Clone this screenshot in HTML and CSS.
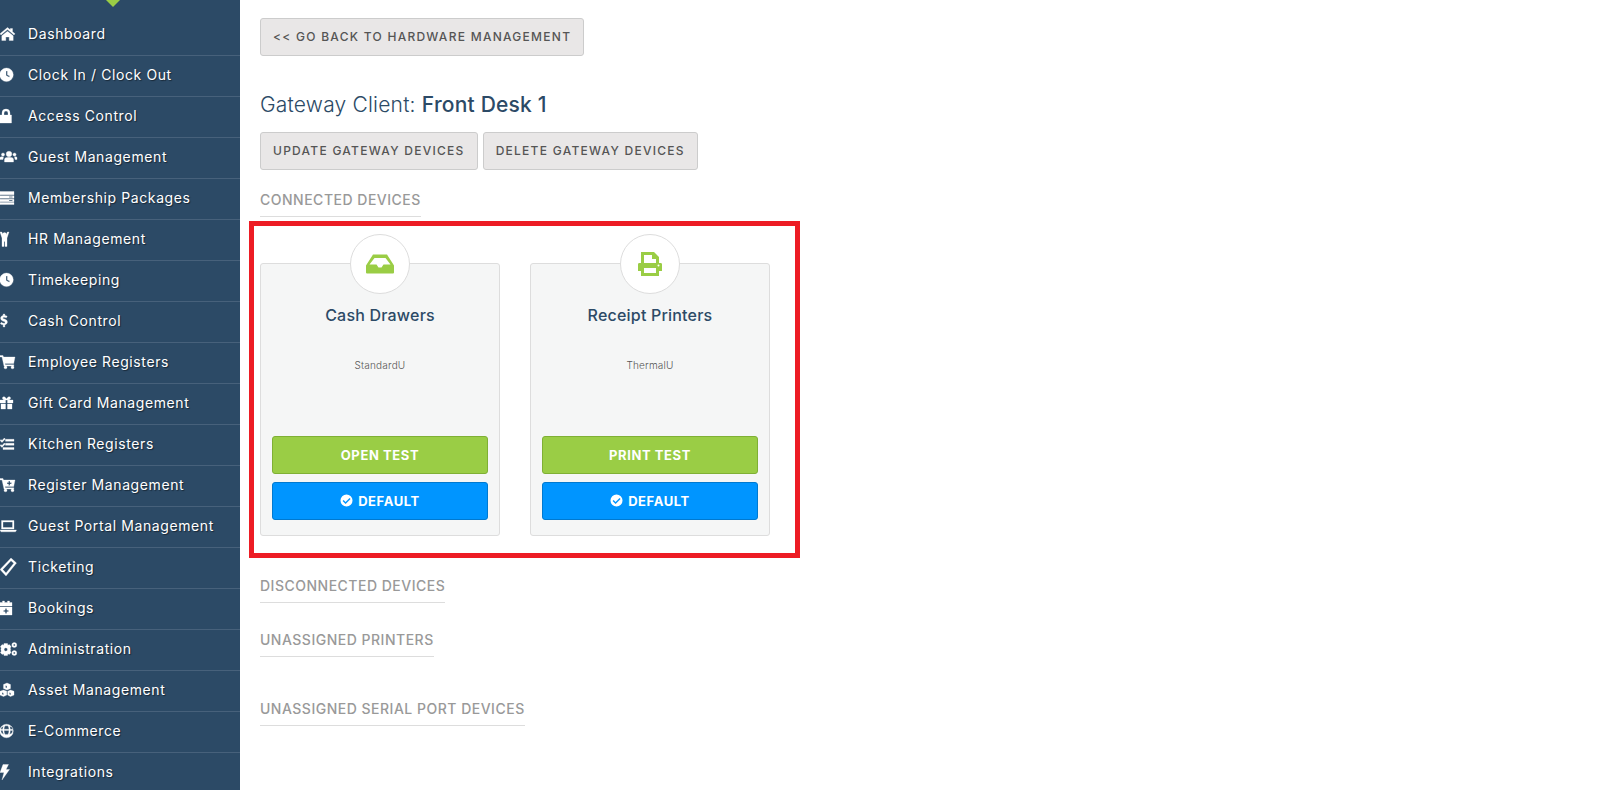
FILE: index.html
```html
<!DOCTYPE html>
<html lang="en">
  <head>
    <meta charset="UTF-8" />
    <title>Gateway Client</title>
    <link rel="stylesheet" href="styles.css">
  </head>
  <body>
    <nav class="sidebar">
      <div class="notch"></div>
      <a class="nav-item"><svg class="nav-icon" viewBox="0 0 16 16"><path d="M7.500 1.500 0 7.800l1 1.200 6.500-5.400L14 9l1-1.200-2.500-2.100V2.500h-2.200v1.300zM1.800 9.800V14.500h4v-3.500h3.400v3.500h4V9.800L7.500 5.200z"/></svg>Dashboard</a>
      <a class="nav-item"><svg class="nav-icon" viewBox="0 0 16 16"><path fill-rule="evenodd" d="M6.500 1a6.800 6.800 0 1 1 0 13.600A6.800 6.800 0 0 1 6.500 1zM6 4v4.500l3.200 1.700.6-1.100L7.400 7.800V4z"/></svg>Clock In / Clock Out</a>
      <a class="nav-item"><svg class="nav-icon" viewBox="0 0 16 16"><path fill-rule="evenodd" d="M2 7V5a4 4 0 0 1 8 0v2h1.500v8H0V7zm2 0h4V5a2 2 0 0 0-4 0z"/></svg>Access Control</a>
      <a class="nav-item"><svg class="nav-icon" viewBox="0 0 16 16"><circle cx="9" cy="5" r="2.800"/><circle cx="3" cy="5.500" r="1.600"/><circle cx="14.500" cy="5.500" r="1.600"/><path d="M4.500 13v-2.500C4.500 9 6 8.200 9 8.200s4.500.8 4.500 2.300V13zM0 10.500V8.800C0 8 1 7.600 3.500 7.800L3 10.500zM17 10.500V8.800c0-.8-1-1.200-2.500-1l.5 2.700z"/></svg>Guest Management</a>
      <a class="nav-item"><svg class="nav-icon" viewBox="0 0 16 16"><path fill-rule="evenodd" d="M0 1.500h14v3.200H0zM0 5.700h14v2.600H0zM9 6.500v1h3.500v-1zM0 9.300h14v2.400H0zM9 10v1h3.500v-1zM0 12.500h14v2H0z"/></svg>Membership Packages</a>
      <a class="nav-item"><svg class="nav-icon" viewBox="0 0 16 16"><circle cx="4.500" cy="3.500" r="1.900"/><path d="M0 1h1.800l1.600 3.500h2.400L7.400 1H9L7 7v8.500H5V10.500H4v5H2V7z"/></svg>HR Management</a>
      <a class="nav-item"><svg class="nav-icon" viewBox="0 0 16 16"><path fill-rule="evenodd" d="M6.500 1a6.800 6.800 0 1 1 0 13.600A6.800 6.800 0 0 1 6.500 1zM6 4v4.500l3.200 1.700.6-1.100L7.400 7.800V4z"/></svg>Timekeeping</a>
      <a class="nav-item"><svg class="nav-icon" viewBox="0 0 16 16"><path d="M3.200 1h1.600v1.500c1 .1 1.800.4 2.400.8l-.8 1.500C5.600 4.400 4.800 4.200 4 4.200c-.8 0-1.200.3-1.200.7 0 1.200 4.600.8 4.600 4 0 1.500-1 2.500-2.600 2.800V14H3.200v-2.200C2 11.700 1 11.300.3 10.700l1-1.400c.8.600 1.700 1 2.500 1 .9 0 1.300-.4 1.300-.9C5.100 8.100.6 8.500.6 5.300c0-1.500 1-2.500 2.600-2.800z"/></svg>Cash Control</a>
      <a class="nav-item"><svg class="nav-icon" viewBox="0 0 16 16"><circle cx="5.500" cy="13.300" r="1.500"/><circle cx="12.500" cy="13.300" r="1.500"/><path d="M0 1.500h3l.5 1.500H15l-1.300 6.500H5l.3 1.200h8.500V12H4L2 3H0z"/></svg>Employee Registers</a>
      <a class="nav-item"><svg class="nav-icon" viewBox="0 0 16 16"><path fill-rule="evenodd" d="M0 5h5c-2-.3-2.800-1.200-2.500-2.300C2.800 1.500 5 1.300 6.500 4 8 1.300 10.200 1.500 10.500 2.700 10.800 3.800 10 4.700 8 5h5v3H7.500V5h-2v3H0zM1 9h4.500v5H1zM7.500 9H12v5H7.500z"/></svg>Gift Card Management</a>
      <a class="nav-item"><svg class="nav-icon" viewBox="0 0 16 16"><path d="M0 4.500 1 3.500l1 1L4.300 2l1 1L2 6.500zM0 9.500l1-1 1 1 2.300-2.500 1 1L2 11.500zM5.500 3.300H14V5.300H5.500zM5.500 7.300H14V9.300H5.500zM3 11.500H14V13.500H3z"/></svg>Kitchen Registers</a>
      <a class="nav-item"><svg class="nav-icon" viewBox="0 0 16 16"><circle cx="5.500" cy="13.300" r="1.500"/><circle cx="12.500" cy="13.300" r="1.500"/><path fill-rule="evenodd" d="M0 1.500h3l.5 1.500H15l-1.300 6.500H5l.3 1.200h8.500V12H4L2 3H0zM8.500 4v1.500H7V7h1.500v1.500H10V7h1.500V5.500H10V4z"/></svg>Register Management</a>
      <a class="nav-item"><svg class="nav-icon" viewBox="0 0 16 16"><path fill-rule="evenodd" d="M1.500 2.500h12.500v8.500h-12.500zM3 4v5.500h9.500V4zM0 12h16.500l-1 1.800H1z"/></svg>Guest Portal Management</a>
      <a class="nav-item"><svg class="nav-icon" viewBox="0 0 16 16"><path fill-rule="evenodd" d="M11-1 16.500 4 6 17 0 10.500zM11 1.800 2.800 10.500 6 14 13.800 4.200z"/></svg>Ticketing</a>
      <a class="nav-item"><svg class="nav-icon" viewBox="0 0 16 16"><path fill-rule="evenodd" d="M2.500 1h2v1.500h3V1h2v1.500H12V6H0V2.500h2.500zM0 7h12v8H0zM5.200 8.500v1.700H3.500v1.500h1.700v1.800h1.600v-1.800h1.700v-1.500H6.800V8.500z"/></svg>Bookings</a>
      <a class="nav-item"><svg class="nav-icon" viewBox="0 0 16 16"><path fill-rule="evenodd" d="M4 2.500h3.500l.4 1.700 1.500-.6 1.800 2.200-1 1.200.5 1.500-.5 1.500 1 1.200-1.800 2.200-1.500-.6-.4 1.700H4l-.4-1.700-1.500.6L.3 11.400l1-1.200L.8 8.500l.5-1.500-1-1.200 1.800-2.200 1.500.6zM5.800 6.800a1.700 1.700 0 1 0 0 3.400 1.700 1.700 0 0 0 0-3.400z"/><path fill-rule="evenodd" d="M14.300 1.500a2.500 2.500 0 1 1 0 5 2.500 2.500 0 0 1 0-5zm0 1.600a.9.9 0 1 0 0 1.800.9.9 0 0 0 0-1.800zM14.300 9.500a2.500 2.500 0 1 1 0 5 2.500 2.500 0 0 1 0-5zm0 1.600a.9.9 0 1 0 0 1.800.9.9 0 0 0 0-1.800z"/></svg>Administration</a>
      <a class="nav-item"><svg class="nav-icon" viewBox="0 0 16 16"><path fill-rule="evenodd" d="M7 1 10.500 2.500v4L7 8 3.500 6.500v-4zM5.500 3.500v2L7 6V4zM3.500 8 6.800 9.300v3.800L3.500 14.500 0 13.100V9.300zM2 10.500v1.800l1.500.6v-1.800zM10.500 8 14 9.300v3.800l-3.500 1.400-2.800-1.400V9.300zM9.300 10.500v1.800l1.500.6v-1.800z"/></svg>Asset Management</a>
      <a class="nav-item"><svg class="nav-icon" viewBox="0 0 16 16"><path fill-rule="evenodd" d="M6.500 1.200a6.800 6.800 0 1 1 0 13.600 6.800 6.800 0 0 1 0-13.600zM5 2.800C4.400 4 4.100 5 4 6.200h5C8.900 5 8.600 4 8 2.800zM4 7.400c0 1.300.4 2.700 1 4h3c.6-1.300 1-2.700 1-4zM10.300 6.200h2.400l-.6-2-2.300-1zM10.300 7.400c0 1.300-.3 2.700-.8 4l2.600-1.500.7-2.500zM2.700 6.200c.1-1 .3-2.300 1-3L1.500 4.200l-.7 2zM2.700 7.400H.7l.8 2.500 2.300 1.500c-.6-1.300-1-2.700-1.100-4z"/></svg>E-Commerce</a>
      <a class="nav-item"><svg class="nav-icon" viewBox="0 0 16 16"><path d="M3 .5h5.500L6 5.500h3.500L2 16l2-7.500H0z"/></svg>Integrations</a>
    </nav>

    <main class="content">
      <a class="btn">&lt;&lt; Go back to hardware management</a>
      <h2 class="client-name">Gateway Client: <b>Front Desk 1</b></h2>
      <div class="btn-row">
        <a class="btn">Update gateway devices</a>
        <a class="btn">Delete gateway devices</a>
      </div>

      <h3 class="section-title">Connected devices</h3>
      <section class="highlight">
        <div class="device-card">
          <div class="device-circle">
            <svg class="device-icon" viewBox="0 0 28 28"><path fill-rule="evenodd" d="M7 4.500h14l7 11v7a1 1 0 0 1-1 1H1a1 1 0 0 1-1-1v-7zM8.500 8 3.500 14.500h7l2 3h3l2-3h7L19.500 8z"/></svg>
          </div>
          <h4 class="device-name">Cash Drawers</h4>
          <p class="device-model">StandardU</p>
          <a class="card-btn green">Open test</a>
          <a class="card-btn blue"><svg class="check" viewBox="0 0 14 14"><path fill-rule="evenodd" d="M7 .500a6.500 6.500 0 1 1 0 13 6.500 6.500 0 0 1 0-13zM10.300 4.300 6 8.500 3.900 6.500 2.800 7.600 6 10.700l5.400-5.300z"/></svg>Default</a>
        </div>
        <div class="device-card">
          <div class="device-circle">
            <svg class="device-icon" viewBox="0 0 28 28"><path fill-rule="evenodd" d="M5 2h13l5 5v6h1.500c1 0 1.500.5 1.500 1.500V21h-3v5H5v-5H2v-6.500c0-1 .5-1.500 1.500-1.500H5zM8 5v8h12V9h-4V5zM8 18v5h12v-5zM22.500 14.500a1 1 0 1 0 0 2 1 1 0 0 0 0-2z"/></svg>
          </div>
          <h4 class="device-name">Receipt Printers</h4>
          <p class="device-model">ThermalU</p>
          <a class="card-btn green">Print test</a>
          <a class="card-btn blue"><svg class="check" viewBox="0 0 14 14"><path fill-rule="evenodd" d="M7 .500a6.500 6.500 0 1 1 0 13 6.500 6.500 0 0 1 0-13zM10.300 4.300 6 8.500 3.900 6.500 2.800 7.600 6 10.700l5.400-5.300z"/></svg>Default</a>
        </div>
      </section>

      <h3 class="section-title disconnected">Disconnected devices</h3>
      <h3 class="section-title printers">Unassigned printers</h3>
      <h3 class="section-title serial">Unassigned serial port devices</h3>
    </main>
  </body>
</html>
```

FILE: styles.css
```css
* {
  margin: 0;
  padding: 0;
  box-sizing: border-box;
}

body {
  height: 790px;
  overflow: hidden;
  display: flex;
  background: #fff;
  font-family: Inter, "Liberation Sans", sans-serif;
  color: #2c4a66;
}

.sidebar {
  width: 240px;
  height: 790px;
  flex-shrink: 0;
  overflow: hidden;
  position: relative;
  padding-top: 15px;
  background: #2c4a66;
}

.notch {
  position: absolute;
  top: -1px;
  left: 105px;
  width: 0;
  height: 0;
  border-left: 8px solid transparent;
  border-right: 8px solid transparent;
  border-top: 8px solid #9acd45;
}

.nav-item {
  height: 41px;
  display: flex;
  align-items: center;
  gap: 12px;
  padding-bottom: 3px;
  border-bottom: 1px solid #47617b;
  color: #fff;
  font-size: 14px;
  letter-spacing: 0.6px;
  text-shadow: 1px 1px 1px rgba(0, 0, 0, 0.45);
}

.nav-icon {
  width: 16px;
  height: 16px;
  flex-shrink: 0;
  fill: #fff;
  stroke: #fff;
  stroke-width: 0.3;
  overflow: visible;
}

.content {
  flex: 1;
  padding: 18px 0 0 20px;
}

.btn {
  display: inline-flex;
  align-items: center;
  height: 38px;
  padding: 0 12px 2px;
  background: #e9e7e7;
  border: 1px solid #ccc;
  border-radius: 3px;
  color: #555;
  font-size: 12px;
  font-weight: 500;
  letter-spacing: 1.27px;
  text-transform: uppercase;
}

.client-name {
  margin: 37px 0 15px;
  font-size: 21px;
  line-height: 24px;
  font-weight: 300;
  letter-spacing: 0.2px;
}

.client-name b {
  font-weight: 500;
}

.btn-row {
  display: flex;
  gap: 5px;
}

.section-title {
  width: fit-content;
  margin-top: 20px;
  padding-bottom: 6px;
  border-bottom: 1px solid #ddd;
  color: #999;
  font-size: 14px;
  line-height: 20px;
  font-weight: 500;
  letter-spacing: 0.5px;
  text-transform: uppercase;
}

.section-title.disconnected {
  margin-top: 18px;
}

.section-title.printers {
  margin-top: 27px;
}

.section-title.serial {
  margin-top: 42px;
}

.highlight {
  width: 551px;
  margin: 4px 0 0 -11px;
  padding: 37px 0 17px 6px;
  display: flex;
  gap: 30px;
  border: 5px solid #ed1c24;
}

.device-card {
  width: 240px;
  height: 273px;
  display: flex;
  flex-direction: column;
  align-items: center;
  padding: 0 11px 15px;
  position: relative;
  background: #f5f6f6;
  border: 1px solid #ddd;
  border-radius: 3px;
}

.device-circle {
  position: absolute;
  top: -30px;
  left: 89px;
  width: 60px;
  height: 60px;
  display: flex;
  align-items: center;
  justify-content: center;
  background: #fff;
  border: 1px solid #ddd;
  border-radius: 50%;
}

.device-icon {
  width: 28px;
  height: 28px;
  fill: #9acd45;
}

.device-name {
  margin-top: 41px;
  font-size: 16px;
  line-height: 20px;
  font-weight: 500;
  letter-spacing: 0.2px;
}

.device-model {
  margin-top: 34px;
  font-size: 10px;
  line-height: 12px;
  font-weight: 300;
  letter-spacing: 0.2px;
  color: #555;
}

.card-btn {
  width: 216px;
  height: 38px;
  flex-shrink: 0;
  display: flex;
  align-items: center;
  justify-content: center;
  gap: 5px;
  padding-bottom: 1px;
  border-radius: 3px;
  color: #fff;
  font-size: 13px;
  font-weight: 700;
  letter-spacing: 0.6px;
  text-transform: uppercase;
}

.card-btn.green {
  margin-top: auto;
  background: #9acd45;
  border: 1px solid #7fb034;
}

.card-btn.blue {
  margin-top: 8px;
  background: #0095ff;
  border: 1px solid #0079d0;
}

.check {
  width: 13px;
  height: 13px;
  fill: #fff;
}
```
